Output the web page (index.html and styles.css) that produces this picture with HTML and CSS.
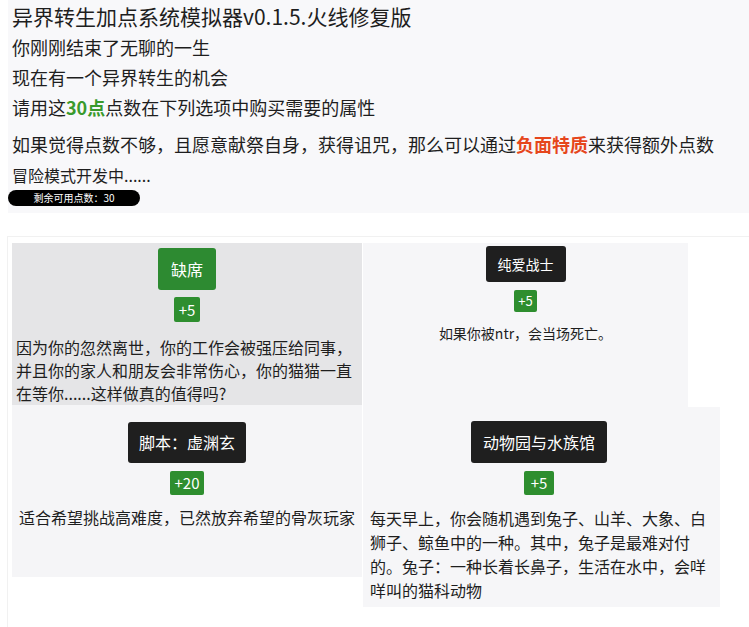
FILE: index.html
```html
<!DOCTYPE html>
<html lang="zh-CN">
<head>
<meta charset="utf-8">
<title>异界转生加点系统模拟器</title>
<link rel="stylesheet" href="styles.css">
</head>
<body>
<div class="intro">
  <h1 class="title">异界转生加点系统模拟器v0.1.5.火线修复版</h1>
  <p class="line">你刚刚结束了无聊的一生</p>
  <p class="line">现在有一个异界转生的机会</p>
  <p class="line line-buy">请用这<b class="green">30点</b>点数在下列选项中购买需要的属性</p>
  <p class="line line-big">如果觉得点数不够，且愿意献祭自身，获得诅咒，那么可以通过<b class="red">负面特质</b>来获得额外点数</p>
  <p class="line line-small">冒险模式开发中......</p>
  <div class="pill">剩余可用点数：30</div>
</div>

<div class="board">
  <div class="col col-left">
    <div class="card card-absent">
      <div class="btn btn-green">缺席</div>
      <div class="badge">+5</div>
      <p class="desc desc-left">因为你的忽然离世，你的工作会被强压给同事，并且你的家人和朋友会非常伤心，你的猫猫一直在等你......这样做真的值得吗?</p>
    </div>
    <div class="card card-script">
      <div class="btn btn-dark">脚本：虚渊玄</div>
      <div class="badge">+20</div>
      <p class="desc desc-center">适合希望挑战高难度，已然放弃希望的骨灰玩家</p>
    </div>
  </div>
  <div class="col col-right">
    <div class="card card-pure">
      <div class="btn btn-dark btn-small">纯爱战士</div>
      <div class="badge badge-small">+5</div>
      <p class="desc desc-center desc-small">如果你被ntr，会当场死亡。</p>
    </div>
    <div class="card card-zoo">
      <div class="btn btn-dark">动物园与水族馆</div>
      <div class="badge">+5</div>
      <p class="desc desc-left desc-zoo">每天早上，你会随机遇到兔子、山羊、大象、白狮子、鲸鱼中的一种。其中，兔子是最难对付的。兔子：一种长着长鼻子，生活在水中，会咩咩叫的猫科动物</p>
    </div>
  </div>
</div>
</body>
</html>
```

FILE: styles.css
```css
html, body {
  margin: 0;
  padding: 0;
  background: #ffffff;
  overflow: hidden;
}

body {
  font-family: "Noto Sans CJK SC", "Microsoft YaHei", "Noto Sans", sans-serif;
  color: #1e1e1e;
}

.intro {
  margin-left: 8px;
  background: #f8f8fa;
  padding: 0 0 7px 0;
}

.title {
  margin: 0;
  padding-left: 4px;
  font-size: 21px;
  font-weight: 400;
  line-height: 32px;
}

.line {
  margin: 0;
  padding-left: 4px;
  font-size: 18px;
  line-height: 30px;
}

.line-buy {
  line-height: 31px;
}

.line-big {
  margin-top: 3px;
  font-size: 18px;
  line-height: 36px;
  white-space: nowrap;
}

.line-small {
  font-size: 16px;
  line-height: 26px;
}

.green {
  color: #3a9a2c;
  font-weight: 700;
}

.red {
  color: #e6461c;
  font-weight: 700;
}

.pill {
  margin-top: 2px;
  width: 132px;
  height: 16px;
  line-height: 16px;
  border-radius: 8px;
  background: #000000;
  color: #ffffff;
  font-size: 10px;
  text-align: center;
}

.board {
  margin: 23px 0 0 7px;
  border: 1px solid #f1f1f1;
  border-right: none;
  border-bottom: none;
  padding: 6px 0 0 4px;
  display: flex;
  align-items: flex-start;
  gap: 1px;
  height: 400px;
}

.col {
  display: flex;
  flex-direction: column;
}

.card {
  display: flex;
  flex-direction: column;
  align-items: center;
  box-sizing: border-box;
  background: #f6f6f8;
}

.card-absent {
  width: 350px;
  height: 162px;
  padding: 5px 4px 0;
  background: #e5e5e7;
}

.card-script {
  width: 350px;
  height: 172px;
  padding: 17px 4px 0;
  background: #f5f5f7;
}

.card-pure {
  width: 325px;
  height: 164px;
  padding: 3px 4px 0;
}

.card-zoo {
  width: 357px;
  height: 200px;
  padding: 14px 10px 0 7px;
  align-items: flex-start;
}

.card-zoo .btn,
.card-zoo .badge {
  align-self: center;
  position: relative;
  left: -1px;
}

.btn {
  height: 42px;
  line-height: 42px;
  padding: 0 12px;
  border-radius: 3px;
  color: #ffffff;
  font-size: 16px;
}

.card-script .btn {
  height: 41px;
  line-height: 41px;
  padding: 0 11px;
}

.btn-green {
  background: #2d8a31;
  padding: 0 13px;
}

.btn-dark {
  background: #1f1f1f;
}

.btn-small {
  height: 36px;
  line-height: 36px;
  font-size: 14px;
  padding: 0 12px;
}

.badge {
  margin-top: 8px;
  height: 24px;
  line-height: 24px;
  padding: 0 5px;
  border-radius: 2px;
  background: #2e8e2f;
  color: #ffffff;
  font-size: 15px;
}

.card-absent .badge {
  margin-top: 7px;
  height: 25px;
  line-height: 25px;
}

.card-zoo .badge {
  padding: 0 7px;
}

.badge-small {
  height: 22px;
  line-height: 22px;
  font-size: 13px;
  padding: 0 4px;
}

.desc {
  margin: 0;
  font-size: 16px;
}

.desc-left {
  align-self: stretch;
  text-align: left;
}

.desc-center {
  text-align: center;
}

.card-absent .desc {
  margin-top: 14px;
  line-height: 23px;
}

.card-script .desc {
  margin-top: 10px;
  line-height: 24px;
}

.desc-small {
  margin-top: 10px;
  font-size: 14px;
  line-height: 22px;
}

.desc-zoo {
  margin-top: 11px;
  width: 340px;
  line-height: 24px;
}
```
